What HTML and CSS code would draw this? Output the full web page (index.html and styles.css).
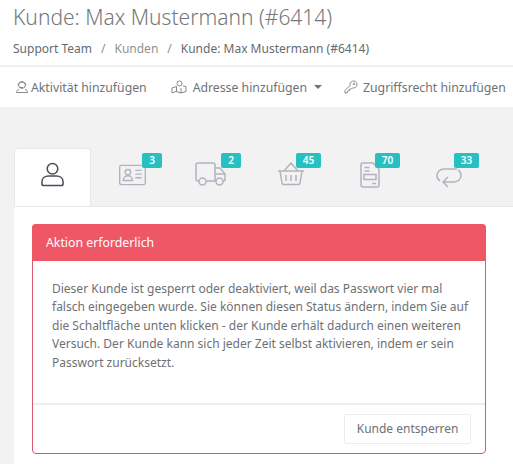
FILE: index.html
```html
<!DOCTYPE html>
<html lang="de">
<head>
<meta charset="utf-8">
<title>Kunde</title>
<link rel="stylesheet" href="styles.css">
</head>
<body>
<header class="head">
  <h1 class="title">Kunde: Max Mustermann (#6414)</h1>
  <nav class="crumbs">
    <span>Support Team</span><span class="sep">/</span><span class="muted">Kunden</span><span class="sep">/</span><span>Kunde: Max Mustermann (#6414)</span>
  </nav>
</header>
<div class="toolbar">
  <span class="tool first">
    <svg class="ticon" viewBox="0 0 14 14"><circle cx="7" cy="5" r="3.4"/><path d="M3.2 5.500c-.8-4.500 8.400-4.500 7.600 0M4 9.500c-2 .6-2.500 1.500-2.500 3h11c0-1.500-.5-2.400-2.500-3M5 7.500h3"/></svg>
    <span>Aktivität hinzufügen</span>
  </span>
  <span class="tool second">
    <svg class="ticon wide" viewBox="0 0 16 14"><circle cx="8.500" cy="3.500" r="2.500"/><path d="M5.500 6.500 1 8v5l4-1.500 5 1.500 5-1.500V6.500l-3-.5M5.500 6.500v5M10 8v5"/></svg>
    <span>Adresse hinzufügen</span>
    <i class="caret"></i>
  </span>
  <span class="tool third">
    <svg class="ticon" viewBox="0 0 14 14"><path d="M1 13v-2.500L6 5.500C5.500 2.500 8 .8 10 1s3.200 2 3 4c-.2 2-2.500 3.500-4.800 3L7 9.200H5.500v1.500H4L3 13z"/><circle cx="10" cy="4" r=".8"/></svg>
    <span>Zugriffsrecht hinzufügen</span>
  </span>
</div>
<main class="content">
  <div class="tabs">
    <div class="tab active">
      <svg class="tabicon" viewBox="0 0 26 28"><circle cx="13" cy="8" r="5.500"/><path d="M9 15.500h8c4 0 7 2.500 7 6v2c0 1-1 2-2 2H4c-1 0-2-1-2-2v-2c0-3.500 3-6 7-6z"/></svg>
    </div>
    <div class="tab">
      <svg class="tabicon card" viewBox="0 0 30 24"><rect x="1" y="1.500" width="28" height="21" rx="2"/><circle cx="10" cy="9" r="3"/><path d="M5 18c0-7 10-7 10 0zM18 7h7M18 11h7M18 15h7"/></svg>
      <b class="badge">3</b>
    </div>
    <div class="tab">
      <svg class="tabicon truck" viewBox="0 0 32 24"><path d="M4 19H3c-1 0-2-1-2-2V3c0-1 1-2 2-2h15c1 0 2 1 2 2v16H11M20 6h5l5 6v6c0 .6-.4 1-1 1h-1M20 19h1M20 12h10"/><circle cx="7.500" cy="19.500" r="3.500"/><circle cx="24.500" cy="19.500" r="3.500"/></svg>
      <b class="badge">2</b>
    </div>
    <div class="tab tab-wide">
      <svg class="tabicon basket" viewBox="0 0 28 24"><path d="M1 9h26M3 9l2 12c.1 1 .8 1.500 1.500 1.500h15c.7 0 1.400-.5 1.500-1.500l2-12M7 9l7-8 7 8M9 13v6M14 13v6M19 13v6"/></svg>
      <b class="badge">45</b>
    </div>
    <div class="tab tab-wide">
      <svg class="tabicon doc" viewBox="0 0 20 26"><path d="M3 1h10l6 6v16c0 1-1 2-2 2H3c-1 0-2-1-2-2V3c0-1 1-2 2-2zM4.500 5.500h5M4.500 9h5M4 12.500h12v5H4zM12 21.500h4"/></svg>
      <b class="badge">70</b>
    </div>
    <div class="tab tab-wide">
      <svg class="tabicon loop" viewBox="0 0 26 22"><path d="M21 2H8C4 2 1 5 1 8.500c0 2.500 1.500 4.500 3 5.500M7 15h11c4 0 7-3 7-6.500 0-2.500-1-4.500-3-5.500M12 10l-5 5 5 5"/></svg>
      <b class="badge">33</b>
    </div>
  </div>
  <section class="panel">
    <div class="alert">
      <div class="alert-head">Aktion erforderlich</div>
      <p class="alert-body">Dieser Kunde ist gesperrt oder deaktiviert, weil das Passwort vier mal<br>falsch eingegeben wurde. Sie können diesen Status ändern, indem Sie auf<br>die Schaltfläche unten klicken - der Kunde erhält dadurch einen weiteren<br>Versuch. Der Kunde kann sich jeder Zeit selbst aktivieren, indem er sein<br>Passwort zurücksetzt.</p>
      <div class="alert-foot"><span class="btn">Kunde entsperren</span></div>
    </div>
  </section>
</main>
</body>
</html>
```

FILE: styles.css
```css
* { box-sizing: border-box; }
html, body { margin: 0; height: 100%; }
body {
  width: 513px;
  height: 464px;
  overflow: hidden;
  background: #fff;
  font-family: "Noto Sans", "Open Sans", sans-serif;
  color: #646b70;
}
.head {
  height: 67px;
  padding: 5px 13px 0;
  border-bottom: 2px solid #f0f0f1;
}
.title {
  margin: 0;
  font-size: 21px;
  line-height: 25px;
  font-weight: 300;
  color: #74787c;
  white-space: nowrap;
}
.crumbs {
  display: flex;
  margin-top: 9px;
  font-size: 12px;
  line-height: 20px;
  white-space: nowrap;
  color: #666b70;
}
.sep { margin: 0 9px 0 9px; color: #8a8f94; }
.muted { color: #8e9297; }
.toolbar {
  height: 40px;
  display: flex;
  align-items: center;
  white-space: nowrap;
  font-size: 12.250px;
  color: #6e7377;
  overflow: hidden;
}
.tool { display: flex; align-items: center; flex: none; }
.first { margin-left: 15px; gap: 2px; }
.second { margin-left: 24px; gap: 6px; }
.third { margin-left: 22px; gap: 5px; }
.ticon {
  width: 14px;
  height: 14px;
  fill: none;
  stroke: #85898e;
  stroke-width: 1;
}
.ticon.wide { width: 16px; }
.caret {
  width: 0;
  height: 0;
  margin-left: 1px;
  border: 4px solid transparent;
  border-top-color: #6e7377;
  border-bottom: 0;
}
.content {
  height: 357px;
  background: #f2f2f3;
  padding: 41px 0 0 14px;
}
.tabs {
  height: 58px;
  display: flex;
}
.tab {
  position: relative;
  width: 79px;
  flex: none;
  padding: 15px 0 0 3px;
  display: flex;
  justify-content: center;
  align-items: flex-start;
}
.tab-wide { padding-left: 5px; }
.tab.active {
  width: 77px;
  background: #fff;
  border-radius: 4px 4px 0 0;
  border: 1px solid #e6e7e8;
  border-bottom: 0;
  padding: 12px 0 0;
}
.tabicon {
  width: 26px;
  height: 28px;
  fill: none;
  stroke: #b0b4be;
  stroke-width: 1.500;
}
.tab.active .tabicon { stroke: #4a4e55; stroke-width: 1.600; width: 25px; height: 27px; }
.tabicon.card { width: 29px; height: 22px; margin-top: 1px; }
.tabicon.truck { width: 32px; height: 24px; margin-top: -1px; }
.tabicon.basket { width: 28px; height: 24px; margin-top: -1px; }
.tabicon.doc { width: 20px; height: 26px; margin-top: -1px; }
.tabicon.loop { width: 26px; height: 22px; margin-top: 4px; }
.badge {
  position: absolute;
  top: 5px;
  left: 51px;
  min-width: 20px;
  height: 15px;
  border-radius: 2px;
  background: #26c0c2;
  color: #fff;
  font-size: 10px;
  font-weight: 600;
  line-height: 15px;
  text-align: center;
}
.tab-wide .badge { left: 47px; min-width: 25px; }
.panel {
  height: 258px;
  background: #fff;
  border-top: 1px solid #e9eaeb;
  padding: 17px 27px 0 18px;
}
.alert {
  height: 230px;
  border: 1px solid #d9596e;
  border-radius: 4px;
  display: flex;
  flex-direction: column;
  background: #fff;
}
.alert-head {
  height: 37px;
  margin: -1px -1px 0;
  padding-left: 14px;
  background: #ef5666;
  color: #fff;
  font-size: 12.300px;
  line-height: 38px;
  border-radius: 4px 4px 0 0;
}
.alert-body {
  flex: 1;
  margin: 0;
  padding: 19px 0 0 19px;
  font-size: 12px;
  line-height: 18.400px;
  color: #6d7175;
  white-space: nowrap;
}
.alert-foot {
  height: 50px;
  border-top: 2px solid #eeeeef;
  display: flex;
  justify-content: flex-end;
  padding: 9px 14px 0 0;
}
.btn {
  height: 30px;
  padding: 0 11.500px;
  border: 1px solid #ececed;
  border-radius: 2px;
  font-size: 12px;
  line-height: 28px;
  color: #6e7175;
}
```
